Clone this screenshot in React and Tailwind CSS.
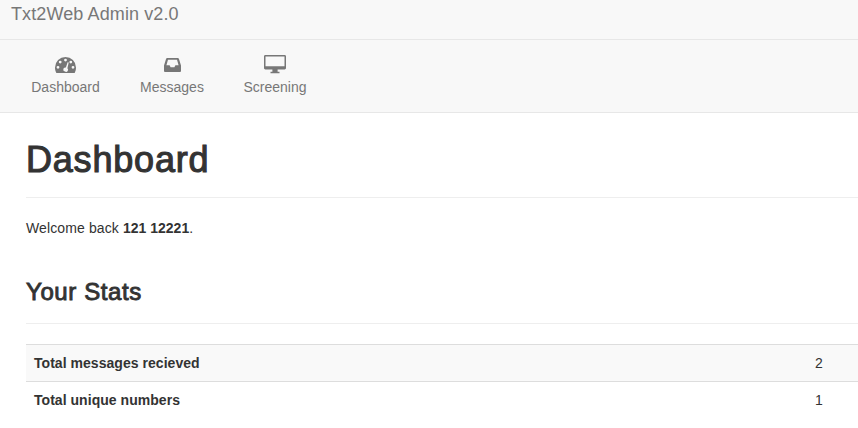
const DashIcon = () => (
  <svg width="21" height="16" viewBox="0 0 21 16" className="mb-[1px]">
    <path
      fill="currentColor"
      fillRule="evenodd"
      d="M10.5 0A10.5 10.5 0 0 1 21 10.5c0 2-.5 3.9-1.4 5.5H1.4C.5 14.4 0 12.5 0 10.5A10.5 10.5 0 0 1 10.5 0ZM10.5 1.7a1.4 1.4 0 1 0 0 2.8a1.4 1.4 0 0 0 0-2.8ZM5.2 3.7a1.4 1.4 0 1 0 0 2.8a1.4 1.4 0 0 0 0-2.8ZM15.8 3.7a1.4 1.4 0 1 0 0 2.8a1.4 1.4 0 0 0 0-2.8ZM3 8.9a1.4 1.4 0 1 0 0 2.8a1.4 1.4 0 0 0 0-2.8ZM18 8.9a1.4 1.4 0 1 0 0 2.8a1.4 1.4 0 0 0 0-2.8ZM12.6 5.2 10.9 10.5a2.1 2.1 0 1 0-.9 4.1a2.1 2.1 0 0 0 2.4-3.4L13.7 5.6Z"
    />
  </svg>
);

const InboxIcon = () => (
  <svg width="17" height="14" viewBox="0 0 17 14" className="mb-[2px]">
    <path
      fill="currentColor"
      fillRule="evenodd"
      d="M3.2 0H13.8C14.3 0 14.7.3 14.9.7L17 7.6V13a1 1 0 0 1-1 1H1a1 1 0 0 1-1-1V7.6L2.1.7C2.3.3 2.7 0 3.2 0ZM4 1.8 2.4 7.2H5.6L6.6 9.2H10.4L11.4 7.2H14.6L13 1.8Z"
    />
  </svg>
);

const ScreenIcon = () => (
  <svg width="22" height="19" viewBox="0 0 22 19">
    <path
      fill="currentColor"
      fillRule="evenodd"
      d="M1.4 0H20.6C21.4 0 22 .6 22 1.4V13.1C22 13.9 21.4 14.5 20.6 14.5H13.6V16.8H15.5V18.2H6.5V16.8H8.4V14.5H1.4C.6 14.5 0 13.9 0 13.1V1.4C0 .6.6 0 1.4 0ZM1.5 1.5V11.3H20.5V1.5Z"
    />
  </svg>
);

const navItems = [
  { label: 'Dashboard', icon: DashIcon, box: 'w-[111px]' },
  { label: 'Messages', icon: InboxIcon, box: 'w-[102px]' },
  { label: 'Screening', icon: ScreenIcon, box: 'w-[104px]' },
];

const stats = [
  { label: 'Total messages recieved', value: 2, rowClass: 'bg-[#f9f9f9]' },
  { label: 'Total unique numbers', value: 1, rowClass: '' },
];

export default function App() {
  return (
    <div className="h-[428px] w-[858px] overflow-hidden bg-white font-['Liberation_Sans',Arial,sans-serif] text-[14px] text-[#333]">
      <header className="flex h-10 items-start border-b border-[#e7e7e7] bg-[#f8f8f8] pl-[11px] pt-[4px] text-[18px] leading-5 tracking-[0.11px] text-[#777]">
        Txt2Web Admin v2.0
      </header>
      <nav className="flex h-[73px] border-b border-[#e7e7e7] bg-[#f8f8f8] pl-[10px] text-[#777]">
        {navItems.map(({ label, icon: Icon, box }) => (
          <a key={label} className={`flex flex-col items-center ${box}`}>
            <span className="mt-[15px] flex h-[19px] items-end"><Icon /></span>
            <span className="mt-[3px] leading-5">{label}</span>
          </a>
        ))}
      </nav>
      <main className="pl-[26px]">
        <h1 className="mt-[25px] border-b border-[#eee] pb-[15px] text-[36px] leading-[44px] font-normal tracking-[0.8px] [-webkit-text-stroke:1.1px_#333]">Dashboard</h1>
        <p className="mt-[20px] leading-5"><span className="tracking-[0.12px]">Welcome back </span><strong>121 12221</strong>.</p>
        <h2 className="mt-[40px] border-b border-[#eee] pb-[17px] text-[24px] leading-[28px] font-normal tracking-[0.6px] [-webkit-text-stroke:0.9px_#333]">Your Stats</h2>
        <table className="mt-[20px] w-full border-collapse border-t border-[#ddd]">
          <tbody>
            {stats.map((row, i) => (
              <tr key={row.label} className={`${row.rowClass} ${i ? 'border-t border-[#ddd]' : ''}`}>
                <td className="h-[37px] px-2 font-bold tracking-[0.04px]">{row.label}</td>
                <td className="w-[43px] px-0 text-left">{row.value}</td>
              </tr>
            ))}
          </tbody>
        </table>
      </main>
    </div>
  );
}
